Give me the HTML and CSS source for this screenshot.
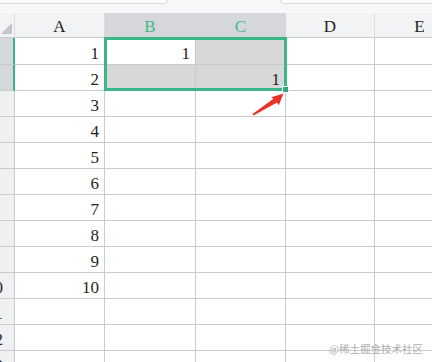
FILE: index.html
```html
<!DOCTYPE html>
<html>
<head>
    <meta charset="utf-8" />
    <title>Sheet selection</title>
    <link rel="stylesheet" href="styles.css">
</head>
<body>
    <div id="page">
        <div class="topbar">
            <span class="tab tab-left"></span>
            <span class="tab tab-right"></span>
        </div>
        <div class="viewport">
            <div class="sheet">
                <div class="corner"><span class="corner-tri"></span></div>
                <div class="colhead">A</div>
                <div class="colhead sel">B</div>
                <div class="colhead sel">C</div>
                <div class="colhead">D</div>
                <div class="colhead">E</div>

                <div class="rowhead sel">1</div><div class="cell num">1</div><div class="cell active num">1</div><div class="cell shade"></div><div class="cell"></div><div class="cell"></div>
                <div class="rowhead sel">2</div><div class="cell num">2</div><div class="cell shade"></div><div class="cell shade num">1</div><div class="cell"></div><div class="cell"></div>
                <div class="rowhead">3</div><div class="cell num">3</div><div class="cell"></div><div class="cell"></div><div class="cell"></div><div class="cell"></div>
                <div class="rowhead">4</div><div class="cell num">4</div><div class="cell"></div><div class="cell"></div><div class="cell"></div><div class="cell"></div>
                <div class="rowhead">5</div><div class="cell num">5</div><div class="cell"></div><div class="cell"></div><div class="cell"></div><div class="cell"></div>
                <div class="rowhead">6</div><div class="cell num">6</div><div class="cell"></div><div class="cell"></div><div class="cell"></div><div class="cell"></div>
                <div class="rowhead">7</div><div class="cell num">7</div><div class="cell"></div><div class="cell"></div><div class="cell"></div><div class="cell"></div>
                <div class="rowhead">8</div><div class="cell num">8</div><div class="cell"></div><div class="cell"></div><div class="cell"></div><div class="cell"></div>
                <div class="rowhead">9</div><div class="cell num">9</div><div class="cell"></div><div class="cell"></div><div class="cell"></div><div class="cell"></div>
                <div class="rowhead">10</div><div class="cell num">10</div><div class="cell"></div><div class="cell"></div><div class="cell"></div><div class="cell"></div>
                <div class="rowhead">11</div><div class="cell"></div><div class="cell"></div><div class="cell"></div><div class="cell"></div><div class="cell"></div>
                <div class="rowhead">12</div><div class="cell"></div><div class="cell"></div><div class="cell"></div><div class="cell"></div><div class="cell"></div>
                <div class="rowhead">13</div><div class="cell"></div><div class="cell"></div><div class="cell"></div><div class="cell"></div><div class="cell"></div>

                <div class="selection"><span class="handle"></span></div>
            </div>
        </div>
        <svg class="arrow" width="40" height="32" viewBox="0 0 40 32">
            <polygon points="4.5,26 25.5,10.8 23.3,9.2 35.5,5.5 30.8,17.2 29,14.6 5.6,27.6" fill="#ea3128"/>
        </svg>
        <div class="watermark">@稀土掘金技术社区</div>
    </div>
</body>
</html>
```

FILE: styles.css
```css
html, body {
    margin: 0;
    padding: 0;
    width: 100%;
    height: 100%;
    overflow: hidden;
    background: #ffffff;
    font-family: "Liberation Serif", "Times New Roman", serif;
    color: #1f1f1f;
}
#page {
    position: relative;
    width: 432px;
    height: 362px;
    overflow: hidden;
}
.topbar {
    height: 13px;
    background: #f7f8fa;
    display: flex;
    justify-content: space-between;
    overflow: hidden;
}
.tab {
    display: block;
    height: 12px;
    margin-top: -10px;
    background: #ffffff;
    border: 1px solid #d6d9de;
    border-radius: 0 0 4px 4px;
}
.tab-left {
    width: 176px;
    margin-left: -10px;
}
.tab-right {
    width: 160px;
    margin-right: -10px;
}
.viewport {
    overflow: hidden;
}
.sheet {
    position: relative;
    display: grid;
    grid-template-columns: 37px 90px 91px 90px 89px 90px;
    grid-template-rows: 25px 27px repeat(12, 26px);
    margin-left: -22px;
    font-size: 17px;
    line-height: 17px;
}
.sheet > div {
    box-sizing: border-box;
}
.corner {
    background: #f2f3f5;
    border-right: 1px solid #dadce0;
    border-bottom: 1px solid #c8cacd;
    position: relative;
}
.corner-tri {
    position: absolute;
    right: 2px;
    bottom: 3px;
    width: 0;
    height: 0;
    border-left: 11px solid transparent;
    border-bottom: 11px solid #c3c5c8;
}
.colhead {
    background: #f2f3f5;
    border-right: 1px solid #dadce0;
    border-bottom: 1px solid #c8cacd;
    display: flex;
    align-items: flex-end;
    justify-content: center;
    padding-bottom: 2px;
}
.colhead.sel {
    background: #d5d7da;
    color: #3dba8c;
    border-right-color: #d5d7da;
}
.rowhead {
    background: #eff0f2;
    border-right: 1px solid #c8cacd;
    border-bottom: 1px solid #c8cacd;
    display: flex;
    align-items: flex-end;
    justify-content: center;
    padding: 0 3px 2px 0;
}
.rowhead.sel {
    background: #d5d7da;
    border-right: 2px solid #35b587;
}
.cell {
    border-right: 1px solid #c8cacd;
    border-bottom: 1px solid #c8cacd;
    display: flex;
    align-items: flex-end;
    justify-content: flex-end;
    padding: 0 5px 2px 0;
}
.cell.shade {
    background: #d8d8d8;
}
.selection {
    position: absolute;
    grid-column: 3 / 5;
    grid-row: 2 / 4;
    top: -1px;
    left: -1px;
    right: -1px;
    bottom: 0;
    border: 3px solid #3ab689;
    z-index: 1;
    pointer-events: none;
}
.handle {
    position: absolute;
    right: -5px;
    bottom: -5px;
    width: 5px;
    height: 5px;
    background: #2fa97d;
    border: 1px solid #ffffff;
}
.arrow {
    position: absolute;
    left: 248px;
    top: 88px;
}
.watermark {
    position: absolute;
    right: 9px;
    bottom: 7px;
    font-family: "Noto Sans CJK SC", "Noto Sans", sans-serif;
    font-size: 10.5px;
    line-height: 13px;
    color: #acacac;
    text-shadow: 0 0 2px #ffffff;
}
```
